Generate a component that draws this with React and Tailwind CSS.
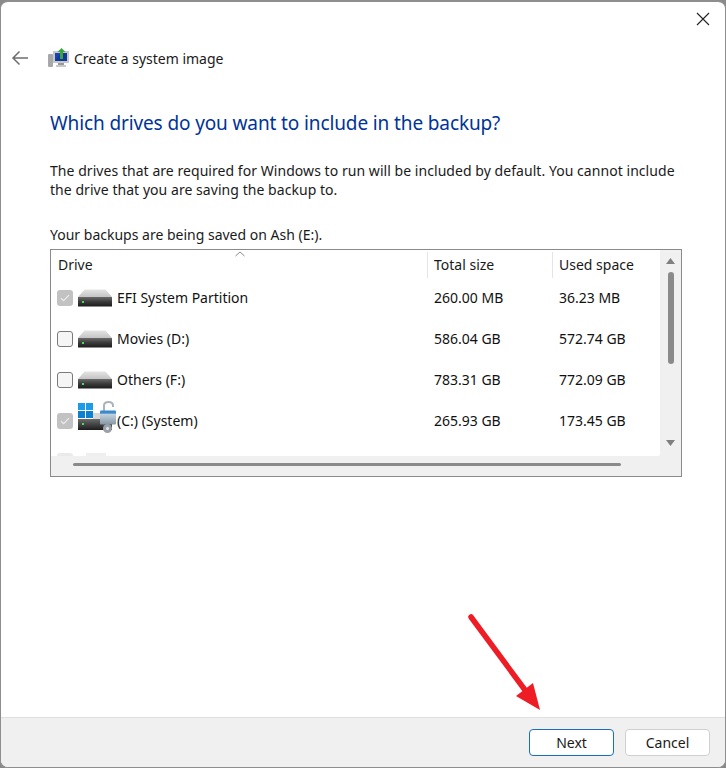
const font = { fontFamily: '"Noto Sans", sans-serif' };

function Drive() {
  return (
    <svg width="34" height="18" viewBox="0 0 34 18" className="block">
      <defs>
        <linearGradient id="dtop" x1="0" y1="0" x2="0" y2="1">
          <stop offset="0" stopColor="#e4e4e4" />
          <stop offset="1" stopColor="#c4c4c4" />
        </linearGradient>
        <linearGradient id="dbot" x1="0" y1="0" x2="0" y2="1">
          <stop offset="0" stopColor="#6a6a6a" />
          <stop offset="0.5" stopColor="#3a3a3a" />
          <stop offset="1" stopColor="#1c1c1c" />
        </linearGradient>
      </defs>
      <path d="M6.500 0.500H27.500L34 8H0Z" fill="url(#dtop)" />
      <rect x="0" y="8" width="34" height="9.500" fill="url(#dbot)" />
      <rect x="4" y="12" width="2" height="2" fill="#3fe05a" />
    </svg>
  );
}

function SystemDrive() {
  return (
    <svg width="40" height="33" viewBox="0 0 40 33" className="block">
      <defs>
        <linearGradient id="lockb" x1="0" y1="0" x2="0" y2="1">
          <stop offset="0" stopColor="#2f86cc" />
          <stop offset="0.2" stopColor="#3f8fd0" />
          <stop offset="0.25" stopColor="#c6d3dd" />
          <stop offset="1" stopColor="#8496a6" />
        </linearGradient>
        <linearGradient id="dbot2" x1="0" y1="0" x2="0" y2="1">
          <stop offset="0" stopColor="#6a6a6a" />
          <stop offset="1" stopColor="#1c1c1c" />
        </linearGradient>
      </defs>
      <rect x="16" y="12" width="18" height="7" fill="#d6d6d6" />
      <rect x="1" y="18" width="34" height="11" fill="url(#dbot2)" />
      <rect x="5" y="22" width="2" height="2" fill="#3fe05a" />
      <rect x="1" y="2" width="7" height="7" fill="#1d9be6" />
      <rect x="9" y="2" width="7" height="7" fill="#1d9be6" />
      <rect x="1" y="10" width="7" height="7" fill="#0f7fd0" />
      <rect x="9" y="10" width="7" height="7" fill="#0f7fd0" />
      <path d="M27 10V4.500C27 2 29 1 31.500 1S36 2 36 4.500V6" fill="none" stroke="#a9b4bd" strokeWidth="2" />
      <rect x="23" y="9.500" width="16" height="14" rx="1" fill="url(#lockb)" />
      <circle cx="30.500" cy="27.500" r="4.500" fill="#9aa1a8" />
      <circle cx="30.500" cy="27.500" r="1.500" fill="#e8e8e8" />
    </svg>
  );
}

function Check({ checked }) {
  if (checked) {
    return (
      <div className="w-4 h-4 rounded-[3px] bg-[#c2c2c2] flex items-center justify-center shrink-0">
        <svg width="10" height="8" viewBox="0 0 10 8">
          <path d="M1 4.200L3.600 6.600L9 1.200" fill="none" stroke="#ececec" strokeWidth="1.200" />
        </svg>
      </div>
    );
  }
  return <div className="w-4 h-4 rounded-[3px] bg-[#f5f5f5] border border-[#7a7a7a] shrink-0" />;
}

const rows = [
  { name: "EFI System Partition", total: "260.00 MB", used: "36.23 MB", checked: true },
  { name: "Movies (D:)", total: "586.04 GB", used: "572.74 GB" },
  { name: "Others (F:)", total: "783.31 GB", used: "772.09 GB" },
  { name: "(C:) (System)", total: "265.93 GB", used: "173.45 GB", checked: true, system: true },
];

function Row({ r }) {
  return (
    <div className="h-[41px] flex items-center text-[14px] text-[#111] shrink-0">
      <div className="w-[376px] flex items-center pl-[6px] relative">
        <Check checked={r.checked} />
        <div className="ml-[5px] w-[34px] h-[18px] relative shrink-0">
          {r.system ? (
            <div className="absolute left-[-1px] top-[-11px]">
              <SystemDrive />
            </div>
          ) : (
            <Drive />
          )}
        </div>
        <span className="ml-[5px]">{r.name}</span>
      </div>
      <div className="w-[125px] pl-[7px]">{r.total}</div>
      <div className="pl-[7px]">{r.used}</div>
    </div>
  );
}

export default function App() {
  return (
    <div className="w-[726px] h-[768px] bg-[#8a8a8a] relative overflow-hidden" style={font}>
      <div className="w-[726px] h-[768px] bg-white border-t-2 border-x border-b border-[#8e8e8e] rounded-[8px] overflow-hidden flex flex-col text-[#1a1a1a]">
        <div className="flex-1 flex flex-col min-h-0">
          <div className="h-[36px] flex justify-end items-start pt-[10px] pr-[15px] shrink-0">
            <svg width="14" height="14" viewBox="0 0 14 14">
              <path d="M1 1L13 13M13 1L1 13" stroke="#222" strokeWidth="1.100" fill="none" />
            </svg>
          </div>
          <div className="h-[40px] flex items-center pl-[10px] shrink-0">
            <svg width="18" height="16" viewBox="0 0 18 16">
              <path d="M17 8H2M8.500 1.500L2 8L8.500 14.500" fill="none" stroke="#6e6e6e" strokeWidth="1.500" />
            </svg>
            <svg width="21" height="20" viewBox="0 0 21 20" className="ml-[19px]">
              <rect x="0" y="6" width="5" height="13" rx="1" fill="#a8a8a8" />
              <rect x="5" y="3" width="16" height="12" fill="#c4c8cc" />
              <rect x="7" y="5" width="12" height="8" fill="#1c44b0" />
              <path d="M7 13L13 5H19V13Z" fill="#0d2f86" opacity="0.6" />
              <rect x="10" y="15" width="6" height="2" fill="#999" />
              <rect x="8" y="17" width="10" height="2" fill="#c8c8c8" />
              <path d="M12 11V4H9.500L13.500 0L17.500 4H15V11Z" fill="#3aa53f" />
            </svg>
            <span className="ml-[5px] text-[14px]">Create a system image</span>
          </div>
          <h1 className="ml-[49px] mt-[31px] text-[19px] tracking-[-0.12px] leading-[28px] text-[#003399] font-normal">
            Which drives do you want to include in the backup?
          </h1>
          <p className="ml-[49px] mt-[24px] w-[640px] text-[14px] tracking-[0.05px] leading-[19px]">
            The drives that are required for Windows to run will be included by default. You cannot include the drive that you are saving the backup to.
          </p>
          <p className="ml-[49px] mt-[26px] text-[14px] leading-[19px]">Your backups are being saved on Ash (E:).</p>
          <div className="ml-[49px] mt-[5px] w-[632px] h-[228px] border border-[#8a8a8a] flex flex-col bg-[#f0f0f0] shrink-0">
            <div className="flex-1 flex min-h-0">
              <div className="flex-1 bg-white rounded-br-[2px] overflow-hidden relative">
                <div className="h-[29px] flex items-center text-[14px] relative shrink-0">
                  <div className="w-[376px] pl-[7px] h-[26px] leading-[26px] relative">
                    Drive
                    <svg width="10" height="6" viewBox="0 0 10 6" className="absolute left-[184px] top-[-1px]">
                      <path d="M0.500 5L5 1L9.500 5" fill="none" stroke="#8a8a8a" strokeWidth="1" />
                    </svg>
                  </div>
                  <div className="w-[125px] pl-[6px] h-[26px] leading-[26px] border-l border-[#e5e5e5]">Total size</div>
                  <div className="pl-[6px] h-[26px] leading-[26px] border-l border-[#e5e5e5]">Used space</div>
                </div>
                <div className="mt-[-2px]">
                  {rows.map((r) => (
                    <Row key={r.name} r={r} />
                  ))}
                  <div className="h-[41px] flex items-start pl-[6px] pt-[12px] opacity-30">
                    <div className="w-4 h-4 rounded-[3px] bg-[#bbb]" />
                    <div className="ml-[13px] w-[20px] h-4 bg-[#ccc]" />
                  </div>
                </div>
              </div>
              <div className="w-[21px] flex flex-col items-center pt-[8px] pb-[10px]">
                <svg width="9" height="6" viewBox="0 0 9 6">
                  <path d="M4.500 0L9 6H0Z" fill="#7f7f7f" />
                </svg>
                <div className="w-[6px] h-[92px] mt-[8px] rounded-[3px] bg-[#8a8a8a]" />
                <div className="flex-1" />
                <svg width="9" height="6" viewBox="0 0 9 6">
                  <path d="M4.500 6L9 0H0Z" fill="#7f7f7f" />
                </svg>
              </div>
            </div>
            <div className="h-[20px] flex items-center pl-[22px] pb-[3px] shrink-0">
              <div className="w-[548px] h-[3px] rounded-[2px] bg-[#8a8a8a]" />
            </div>
          </div>
        </div>
        <div className="h-[50px] bg-[#f0f0f0] border-t border-[#dfdfdf] flex justify-end items-center gap-[11px] pr-[15px] pb-[1px] shrink-0 text-[14px]">
          <button className="w-[85px] h-[27px] rounded-[4px] bg-white border border-[#1a6fb8]">Next</button>
          <button className="w-[85px] h-[27px] rounded-[4px] bg-white border border-[#d0d0d0]">Cancel</button>
        </div>
      </div>
      <svg width="90" height="110" viewBox="0 0 90 110" className="absolute left-[465px] top-[612px]">
        <path d="M6 5L60 78" stroke="#ee1c25" strokeWidth="5.500" strokeLinecap="round" fill="none" />
        <path d="M75 98L51 84L68 71Z" fill="#ee1c25" />
      </svg>
    </div>
  );
}
